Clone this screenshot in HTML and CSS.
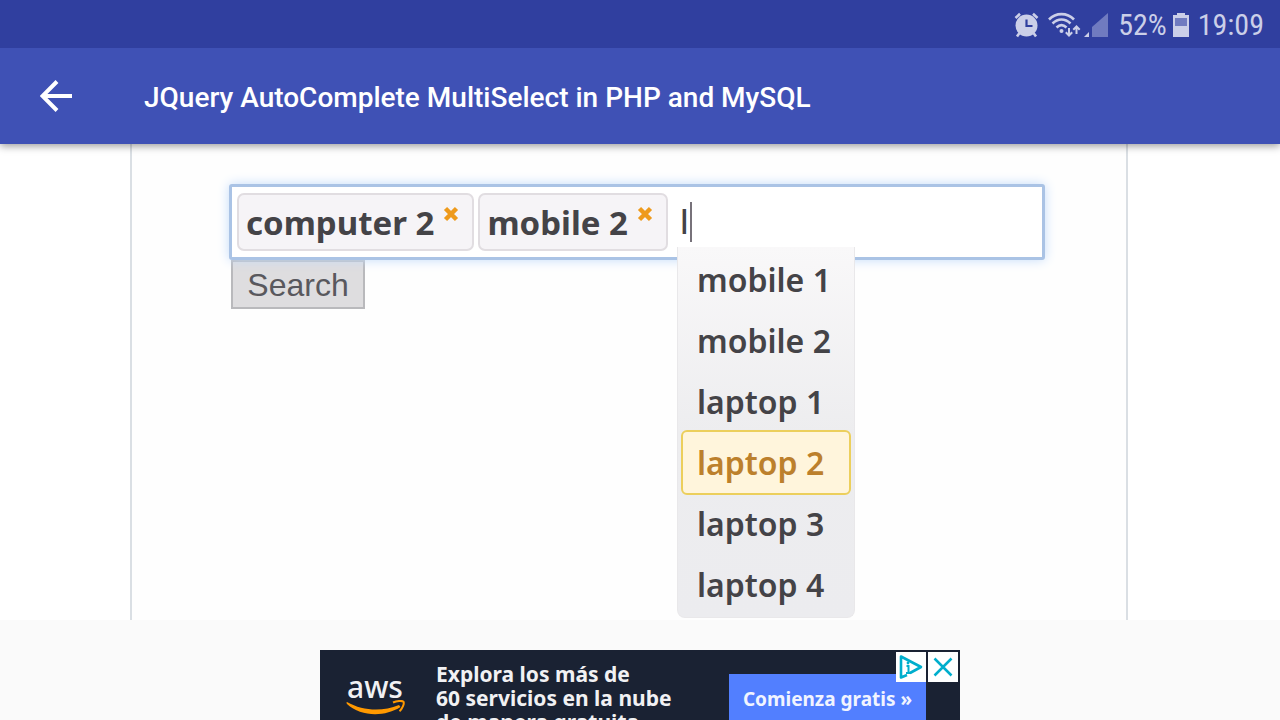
FILE: index.html
```html
<!DOCTYPE html>
<html lang="en">
<head>
<meta charset="utf-8">
<meta name="viewport" content="width=device-width, initial-scale=1">
<title>JQuery AutoComplete MultiSelect in PHP and MySQL</title>
<link rel="stylesheet" href="styles.css">
</head>
<body>
<div class="status">
  <svg class="alarm" viewBox="0 0 26 26" width="26" height="26" aria-label="Alarm">
    <circle cx="12.500" cy="13.500" r="11" fill="currentColor"/>
    <path d="M1.500 6 6 1.800M23.500 6 19 1.800M5.500 21 3 24.500M19.500 21 22 24.500" stroke="currentColor" stroke-width="2.600" fill="none"/>
    <path d="M12.500 7.500v6.500h6" stroke="#303f9f" stroke-width="2.200" fill="none"/>
  </svg>
  <svg class="wifi" viewBox="0 0 33 26" width="33" height="26" aria-label="Wi-Fi">
    <path d="M1 7.500C8 .3 19 .3 26 7.500M4.500 11.500c5.500-5.300 12.500-5.300 18 0M8.500 15.500c3.200-3 6.800-3 10 0" stroke="currentColor" stroke-width="2.600" fill="none"/>
    <circle cx="13.500" cy="19" r="2" fill="currentColor"/>
    <path d="M21 16v7.500M17.800 20.300 21 23.500l3.200-3.200M28.500 22v-7.500M25.300 17.700l3.200-3.200 3.200 3.200" stroke="currentColor" stroke-width="2" fill="none"/>
  </svg>
  <svg class="signal" viewBox="0 0 24 24" width="24" height="24" aria-label="Signal">
    <path d="M0 24 5 19v5z" fill="currentColor"/>
    <path d="M8 24V14L24 0v24z" fill="#707bc0"/>
  </svg>
  <span class="percent">52%</span>
  <svg class="battery" viewBox="0 0 16 24" width="16" height="24" aria-label="Battery">
    <path d="M4 0h8v2h4v22H0V2h4z" fill="currentColor"/>
    <path d="M2 5h12v8H2z" fill="#707bc0"/>
  </svg>
  <span>19:09</span>
</div>
<header class="appbar">
  <button class="back" type="button" aria-label="Back">
    <svg viewBox="0 0 32 32" width="32" height="32"><path d="M32 16H3M17 1.500 2.500 16 17 30.500" stroke="#fff" stroke-width="4" fill="none"/></svg>
  </button>
  <h1 class="title">JQuery AutoComplete MultiSelect in PHP and MySQL</h1>
</header>
<main class="page">
  <form class="demo">
    <div class="field">
      <span class="tag">computer 2 <button class="remove" type="button" aria-label="Remove computer 2"><svg viewBox="0 0 16 16" width="16" height="16"><path d="m2.500 2.500 11 11M13.500 2.500l-11 11" stroke="#ee9a1c" stroke-width="4.500"/></svg></button></span>
      <span class="tag">mobile 2 <button class="remove" type="button" aria-label="Remove mobile 2"><svg viewBox="0 0 16 16" width="16" height="16"><path d="m2.500 2.500 11 11M13.500 2.500l-11 11" stroke="#ee9a1c" stroke-width="4.500"/></svg></button></span>
      <div class="entry">
        <input class="query" type="text" value="l" aria-label="Search terms">
        <span class="caret"></span>
      </div>
      <ul class="menu">
        <li><button class="option" type="button">mobile 1</button></li>
        <li><button class="option" type="button">mobile 2</button></li>
        <li><button class="option" type="button">laptop 1</button></li>
        <li><button class="option active" type="button">laptop 2</button></li>
        <li><button class="option" type="button">laptop 3</button></li>
        <li><button class="option" type="button">laptop 4</button></li>
      </ul>
    </div>
    <button class="search" type="submit">Search</button>
  </form>
</main>
<aside class="ad">
  <div class="logo">
    <span class="aws">aws</span>
    <svg class="smile" viewBox="0 0 60 16" width="60" height="16" aria-hidden="true">
      <path d="M1 2C17 11 36 12 53 5l1.500 2C39 17 15 17 1 4q-1-1.500 0-2z" fill="#f90"/>
      <path d="M47 2.500c4-1.800 9-2 10.500-.8 1 1.800-1 7-4 9.500" stroke="#f90" stroke-width="2" fill="none"/>
    </svg>
  </div>
  <p class="pitch">Explora los más de<br>60 servicios en la nube<br>de manera gratuita</p>
  <a class="cta" href="#">Comienza gratis »</a>
  <div class="choices">
    <button class="choice" type="button" aria-label="Ad choices"><svg viewBox="0 0 30 30" width="30" height="30"><path d="M11 23 5 25.500V4.500l20 10.500-11 6" fill="none" stroke="#00aecd" stroke-width="2.600" stroke-linejoin="round"/><path d="M10.500 14H12.500v7M10 21h5" fill="none" stroke="#00aecd" stroke-width="2"/><circle cx="12" cy="11" r="1.400" fill="#00aecd"/></svg></button>
    <button class="choice" type="button" aria-label="Close ad"><svg viewBox="0 0 30 30" width="30" height="30"><path d="m6.500 6.500 17 17M23.500 6.500l-17 17" stroke="#00aecd" stroke-width="2.500"/></svg></button>
  </div>
</aside>
</body>
</html>
```
FILE: styles.css
```css
* { box-sizing: border-box; }
html { height: 100%; }
body {
  margin: 0;
  height: 100%;
  overflow: hidden;
  background: #fafafa;
  font-family: Roboto, "Liberation Sans", sans-serif;
}
button { font: inherit; color: inherit; margin: 0; padding: 0; border: 0; background: none; }
svg { display: block; }

.status {
  position: relative;
  z-index: 2;
  height: 48px;
  padding: 1px 16px 0 0;
  display: flex;
  align-items: center;
  justify-content: flex-end;
  background: #303f9f;
  color: #cbcfe8;
  font: 30px/48px "Roboto Condensed", "Liberation Sans Narrow", Roboto, sans-serif;
}
.alarm { margin-right: 8px; }
.wifi { margin-right: 3px; }
.signal { margin-right: 10px; }
.battery { margin: 0 9px 0 6px; }

.appbar {
  position: relative;
  z-index: 1;
  height: 96px;
  padding-left: 40px;
  display: flex;
  align-items: center;
  gap: 72px;
  background: #3f51b5;
  color: #fff;
  box-shadow: 0 2px 8px rgba(0, 0, 0, .4);
}
.title { margin: 0; font-size: 28px; font-weight: 500; line-height: 36px; padding-top: 3px; }

.page { background: #fff; padding: 0 152px 0 130px; }
.demo {
  min-height: 476px;
  padding: 40px 81px 0 97px;
  border: solid #dadfe4;
  border-width: 0 2px;
  background: #fefefe;
  font-family: "Noto Sans", "Open Sans", sans-serif;
  font-weight: 600;
  color: #444347;
}
.field {
  position: relative;
  display: flex;
  align-items: center;
  gap: 4px;
  height: 76px;
  padding: 0 5px;
  border: 3px solid #aac3e5;
  border-radius: 3px;
  background: #fff;
  box-shadow: 0 0 12px #c4dcfb;
}
.tag {
  display: flex;
  gap: 9px;
  height: 58px;
  padding: 0 13px 0 7px;
  border: 2px solid #e1dde1;
  border-radius: 7px;
  background: #f6f4f7;
  font-size: 33px;
  font-weight: 700;
  line-height: 56px;
  white-space: nowrap;
}
.remove { align-self: flex-start; padding-top: 11px; }
.entry { position: relative; flex: 1; min-width: 0; }
.query {
  width: 100%;
  padding: 0 8px;
  border: 0;
  outline: 0;
  background: none;
  font: 500 32px/44px "Noto Sans", sans-serif;
  color: #444347;
}
.caret { position: absolute; left: 18px; top: 2px; width: 2px; height: 40px; background: #77727a; }
.menu {
  position: absolute;
  top: 60px;
  left: 445px;
  width: 178px;
  margin: 0;
  padding: 2px 3px;
  list-style: none;
  border: solid #e9e8ea;
  border-width: 0 1px 1px;
  border-radius: 0 0 8px 8px;
  background: linear-gradient(#f9f8f9, #ededef 50%, #ececef);
}
.option {
  display: block;
  width: 100%;
  height: 61px;
  padding: 0 14px;
  text-align: left;
  font-size: 32px;
  line-height: 57px;
  border: 2px solid transparent;
  border-radius: 6px;
}
.option.active { height: 65px; margin: -2px 0; line-height: 61px; border-color: #eccf5c; background: #fff5dc; color: #bc802c; }
.search {
  margin-left: 2px;
  width: 134px;
  height: 49px;
  border: 2px solid #b9b9bc;
  background: #dedddf;
  font: 32px/42px "Liberation Sans", sans-serif;
  color: #59585d;
}

.ad {
  position: relative;
  width: 640px;
  height: 100px;
  margin: 30px auto 0;
  padding: 0 34px 0 26px;
  display: flex;
  align-items: flex-start;
  background: #1a2233;
  color: #f1f1f3;
  font-family: "Noto Sans", sans-serif;
  font-weight: 700;
}
.logo { width: 90px; padding-top: 21px; }
.aws { display: block; padding-left: 1px; font-size: 30px; line-height: 32px; font-weight: 500; }
.smile { margin-top: -3px; }
.pitch { margin: 0; padding-top: 12px; flex: 1; font-size: 21px; line-height: 24px; white-space: nowrap; }
.cta {
  width: 197px;
  height: 52px;
  margin-top: 24px;
  background: #527fff;
  color: #f1f4ff;
  font-size: 19px;
  line-height: 50px;
  text-align: center;
  text-decoration: none;
}
.choices { position: absolute; top: 2px; right: 2px; display: flex; gap: 2px; }
.choice { background: #fff; }
```
